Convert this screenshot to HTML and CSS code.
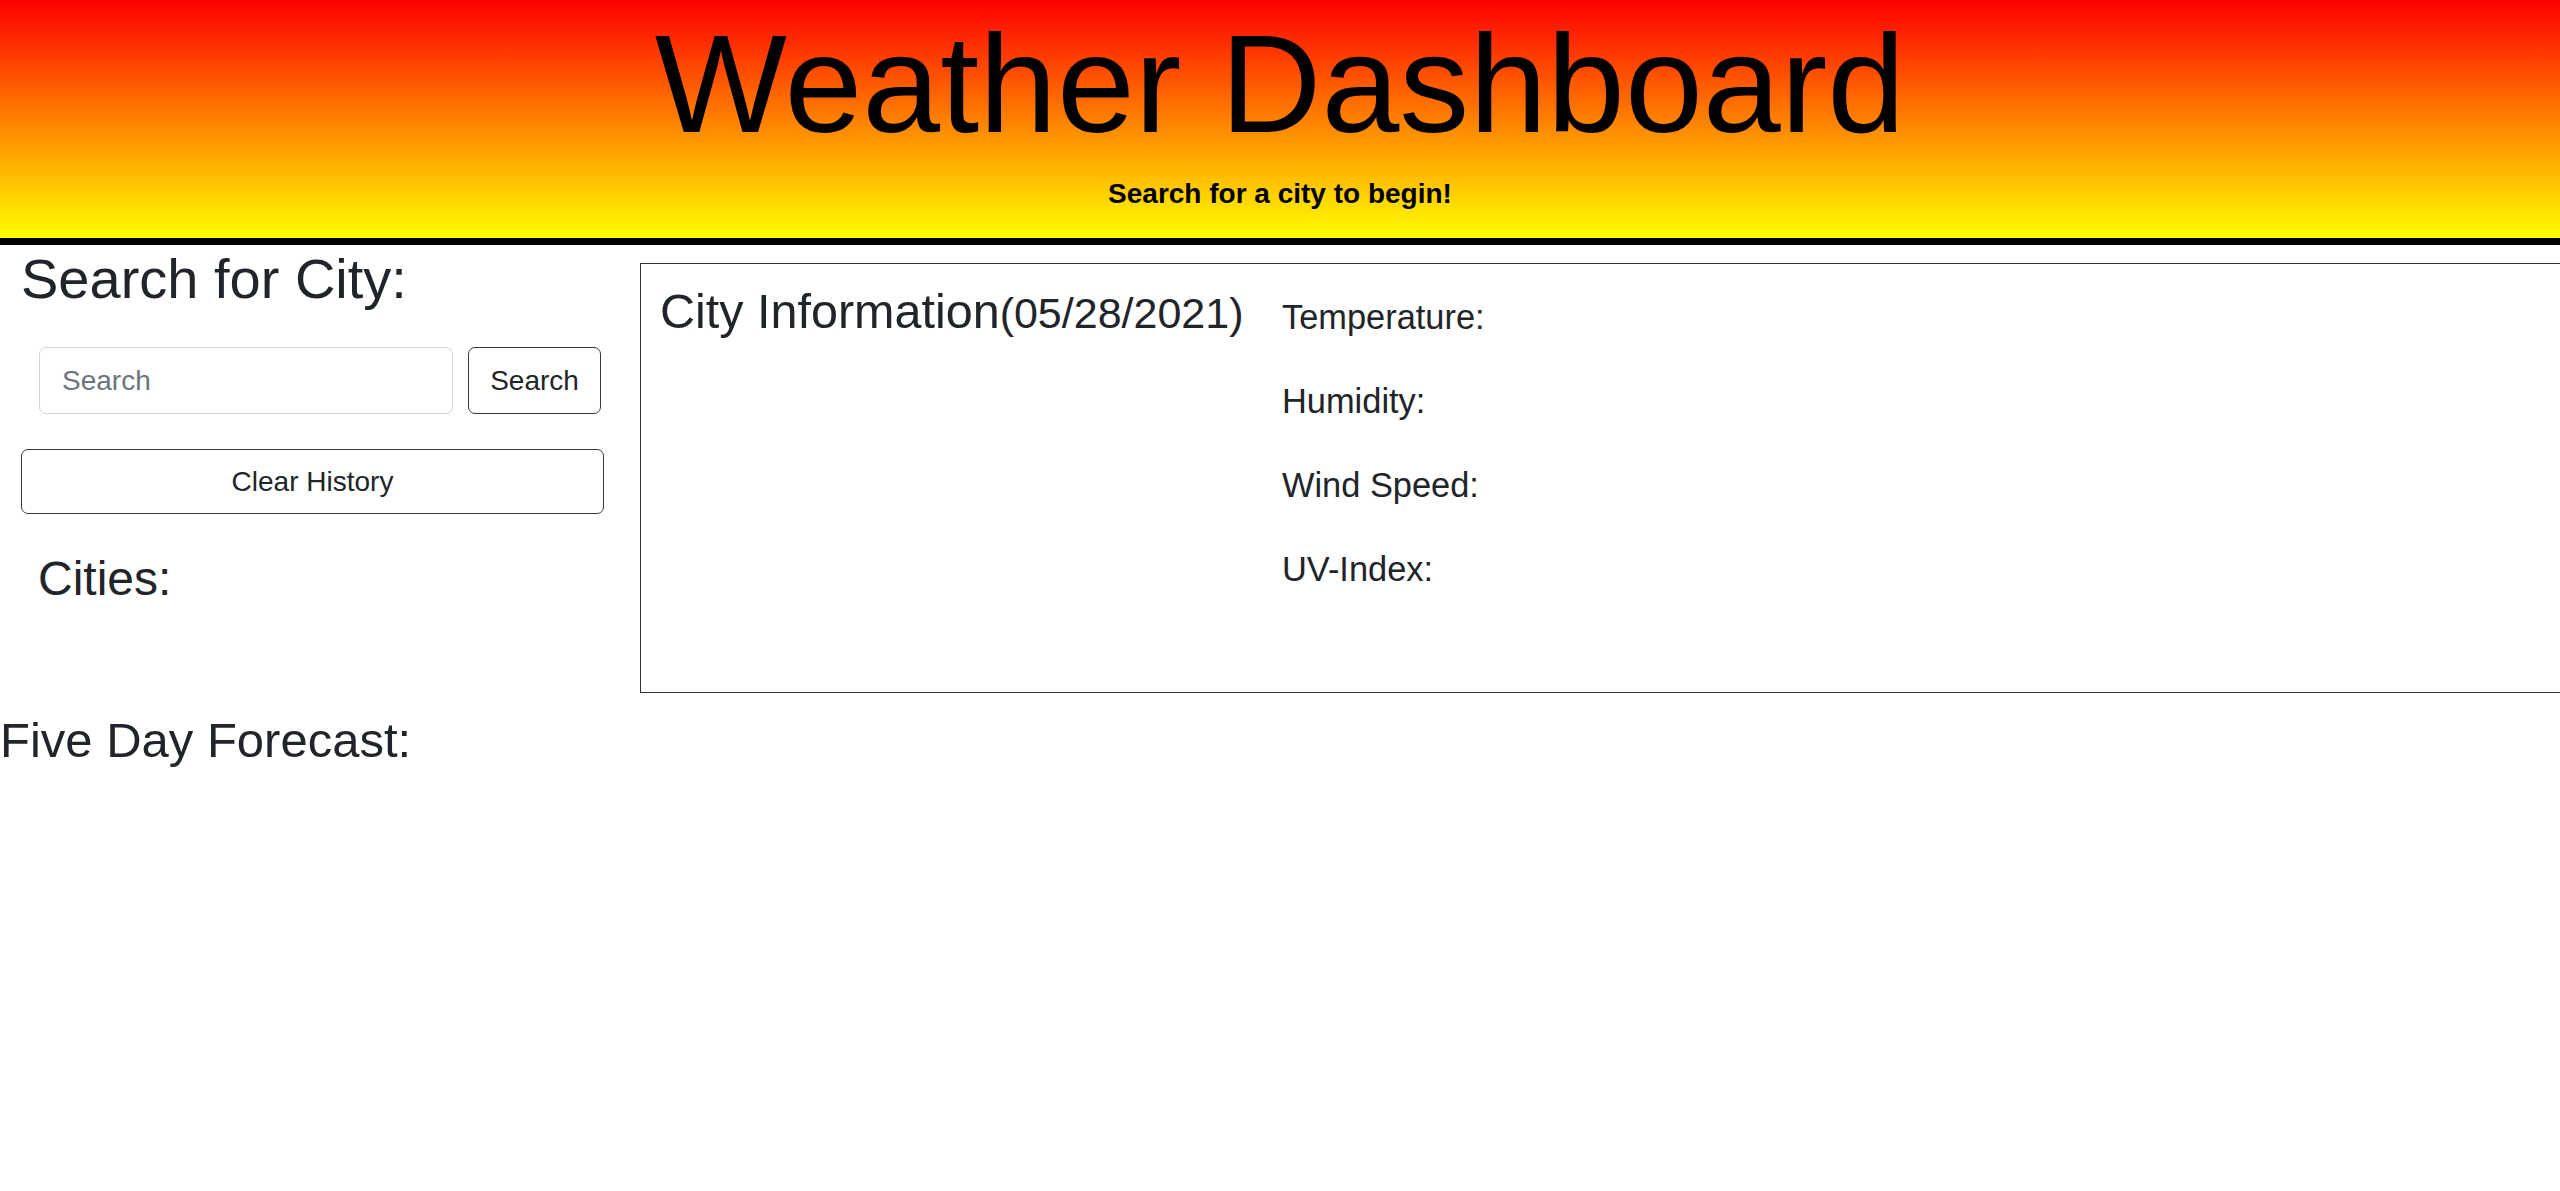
FILE: index.html
```html
<!DOCTYPE html>
<html lang="en">
<head>
<meta charset="utf-8">
<title>Weather Dashboard</title>
<link rel="stylesheet" href="styles.css">
</head>
<body>
<header class="hero">
  <h1 class="hero-title">Weather Dashboard</h1>
  <p class="hero-sub">Search for a city to begin!</p>
</header>
<main class="main">
  <div class="row">
    <aside class="sidebar">
      <h2 class="search-title">Search for City:</h2>
      <form class="search-form">
        <input class="search-input" type="text" placeholder="Search">
        <button class="btn btn-search" type="button">Search</button>
      </form>
      <button class="btn btn-clear" type="button">Clear History</button>
      <h3 class="cities-title">Cities:</h3>
    </aside>
    <section class="city-card">
      <h2 class="city-name">City Information<span class="city-date">(05/28/2021)</span></h2>
      <div class="stats">
        <h4 class="stat">Temperature:</h4>
        <h4 class="stat">Humidity:</h4>
        <h4 class="stat">Wind Speed:</h4>
        <h4 class="stat">UV-Index:</h4>
      </div>
    </section>
  </div>
  <h2 class="forecast-title">Five Day Forecast:</h2>
</main>
</body>
</html>
```
FILE: styles.css
```css
* {
  box-sizing: border-box;
}

html, body {
  margin: 0;
  padding: 0;
}

body {
  font-family: "Liberation Sans", Arial, sans-serif;
  color: #212529;
  background: #fff;
  overflow-x: hidden;
}

h1, h2, h3, h4, p {
  margin: 0;
  font-weight: 400;
}

.hero {
  height: 245px;
  padding-top: 14px;
  background: linear-gradient(to bottom, #ff0000 0%, #ffff00 100%);
  border-bottom: 7px solid #000;
  display: flex;
  flex-direction: column;
  align-items: center;
  color: #000;
}

.hero-title {
  font-size: 140px;
  line-height: 140px;
  color: #000;
}

.hero-sub {
  margin-top: 23px;
  font-size: 28px;
  line-height: 34px;
  font-weight: 700;
  color: #000;
}

.main {
  overflow: hidden;
}

.row {
  display: flex;
  align-items: flex-start;
}

.sidebar {
  flex: 0 0 640px;
  padding-left: 21px;
}

.search-title {
  font-size: 56px;
  line-height: 67px;
}

.search-form {
  display: flex;
  gap: 15px;
  margin-top: 35px;
  padding-left: 18px;
}

.search-input {
  width: 414px;
  height: 67px;
  padding: 0 22px;
  font-family: inherit;
  font-size: 28px;
  color: #495057;
  border: 1px solid #ced4da;
  border-radius: 7px;
  background: #fff;
  outline: none;
}

.search-input::placeholder {
  color: #6c757d;
  opacity: 1;
}

.btn {
  font-family: inherit;
  font-size: 28px;
  color: #212529;
  background: transparent;
  border: 1px solid #343a40;
  border-radius: 7px;
  padding: 0;
  cursor: pointer;
}

.btn-search {
  width: 133px;
  height: 67px;
}

.btn-clear {
  display: block;
  margin-top: 35px;
  width: 583px;
  height: 65px;
}

.cities-title {
  margin-top: 36px;
  padding-left: 17px;
  font-size: 48px;
  line-height: 58px;
}

.city-card {
  flex: 1;
  margin-top: 18px;
  margin-right: -10px;
  height: 430px;
  border: 1px solid #333;
  padding: 18px 19px;
  display: flex;
  align-items: flex-start;
}

.city-name {
  flex: 0 0 622px;
  font-size: 48.5px;
  line-height: 58px;
  white-space: nowrap;
}

.city-date {
  font-size: 43px;
}

.stats {
  margin-top: 15px;
}

.stat {
  font-size: 34.4px;
  line-height: 40px;
  margin-bottom: 44px;
}

.forecast-title {
  margin-top: 18px;
  font-size: 49px;
  line-height: 58px;
}
```
